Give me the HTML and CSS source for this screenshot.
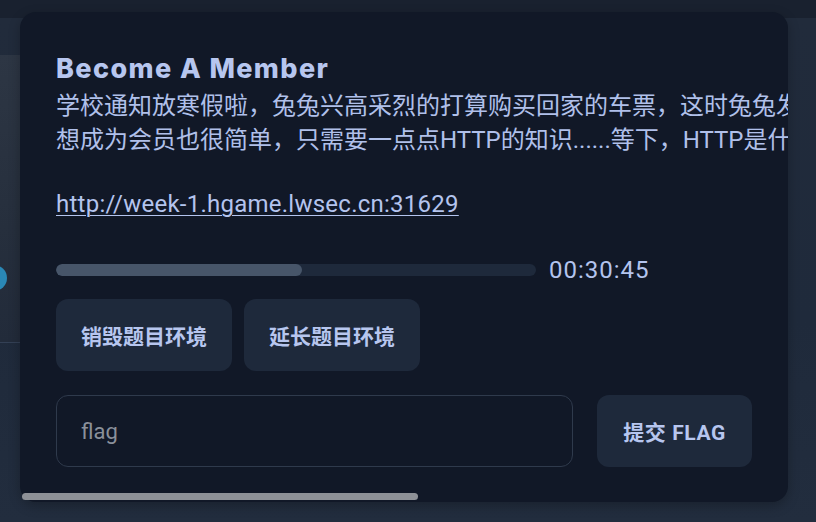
FILE: index.html
```html
<!DOCTYPE html>
<html lang="zh-CN">
<head>
<meta charset="utf-8">
<title>Become A Member</title>
<link rel="stylesheet" href="styles.css">
</head>
<body>
<div class="app">
  <header class="topbar"></header>
  <div class="main">
    <aside class="side">
      <div class="side-panel"><span class="dot"></span></div>
    </aside>
    <div class="content"></div>
  </div>

  <div class="modal">
    <div class="modal-box">
      <h2 class="title">Become A Member</h2>
      <p class="desc">学校通知放寒假啦，兔兔兴高采烈的打算购买回家的车票，这时兔兔发现了一个会员网站<br>想成为会员也很简单，只需要一点点HTTP的知识......等下，HTTP是什么？</p>
      <a class="url" href="#">http://week-1.hgame.lwsec.cn:31629</a>
      <div class="progress-row">
        <div class="track"><div class="fill" style="width:51.3%"></div></div>
        <span class="time">00:30:45</span>
      </div>
      <div class="actions">
        <button class="btn btn-env">销毁题目环境</button>
        <button class="btn btn-env">延长题目环境</button>
      </div>
      <div class="submit-row">
        <input class="flag-input" type="text" placeholder="flag">
        <button class="btn btn-submit">提交 FLAG</button>
      </div>
    </div>
    <div class="hthumb"></div>
  </div>
</div>
</body>
</html>
```

FILE: styles.css
```css
html, body {
  margin: 0;
  padding: 0;
}

body {
  width: 816px;
  height: 522px;
  overflow: hidden;
  background: #1e293b;
  font-family: "Roboto", "Noto Sans CJK SC", sans-serif;
}

.app {
  position: relative;
  display: flex;
  flex-direction: column;
  height: 522px;
}

.topbar {
  flex: none;
  height: 18px;
  background: #19212f;
}

.main {
  flex: 1;
  display: flex;
  background: linear-gradient(180deg, #212b3b 0%, #1f2a3b 60%, #222d3e 100%);
}

.side {
  flex: none;
  width: 300px;
  padding-top: 37px;
}

.side-panel {
  position: relative;
  height: 287px;
  background: linear-gradient(180deg, #2d3644 0%, #262f3d 60%, #222b3a 100%);
  border-bottom: 1px solid #334055;
}

.dot {
  position: absolute;
  left: -19px;
  top: 210px;
  width: 26px;
  height: 26px;
  border-radius: 50%;
  background: #2a88b6;
}

.content {
  flex: 1;
}

/* modal */
.modal {
  position: absolute;
  left: 20px;
  top: 12px;
  width: 768px;
  height: 490px;
}

.modal-box {
  box-sizing: border-box;
  height: 100%;
  padding: 36px;
  background: #111827;
  border-radius: 16px;
  overflow: hidden;
  box-shadow: 0 4px 12px rgba(0, 0, 0, 0.25);
}

.hthumb {
  position: absolute;
  left: 2px;
  bottom: 2px;
  width: 396px;
  height: 7px;
  border-radius: 4px;
  background: #8e9197;
}

.title {
  margin: 0;
  font-family: "Inter", "Noto Sans CJK SC", sans-serif;
  font-weight: 800;
  font-size: 27px;
  line-height: 41px;
  letter-spacing: 1.4px;
  color: #b7c6ef;
}

.desc {
  margin: 0;
  font-size: 24px;
  line-height: 34px;
  color: #b0c0ea;
  white-space: nowrap;
}

.url {
  display: block;
  margin-top: 30px;
  font-size: 24px;
  line-height: 34px;
  letter-spacing: 0.25px;
  color: #b4c4ee;
  text-decoration: underline;
  text-underline-offset: 3px;
  text-decoration-thickness: 1px;
}

.progress-row {
  display: flex;
  align-items: center;
  gap: 13px;
  margin-top: 32px;
  height: 34px;
}

.track {
  width: 480px;
  height: 12px;
  border-radius: 6px;
  background: #1e293b;
  overflow: hidden;
}

.fill {
  height: 100%;
  border-radius: 6px;
  background: #475569;
}

.time {
  font-size: 24px;
  letter-spacing: 1px;
  color: #b4c4ee;
}

.actions {
  display: flex;
  gap: 12px;
  margin-top: 12px;
}

.btn {
  height: 72px;
  border: none;
  border-radius: 12px;
  background: #1e293b;
  color: #b7c6ef;
  font-family: "Roboto", "Noto Sans CJK SC", sans-serif;
  font-weight: 700;
  font-size: 21px;
  cursor: pointer;
}

.btn-env {
  width: 176px;
  padding: 0;
}

.submit-row {
  display: flex;
  gap: 24px;
  margin-top: 24px;
}

.flag-input {
  box-sizing: border-box;
  flex: 1;
  height: 72px;
  padding: 0 24px;
  border: 1px solid #2f3a4c;
  border-radius: 12px;
  background: #111827;
  color: #b7c6ef;
  font-family: "Roboto", "Noto Sans CJK SC", sans-serif;
  font-size: 22px;
  outline: none;
}

.flag-input::placeholder {
  color: #8a909a;
}

.btn-submit {
  width: 155px;
  padding: 0;
  letter-spacing: 0.6px;
}
```
